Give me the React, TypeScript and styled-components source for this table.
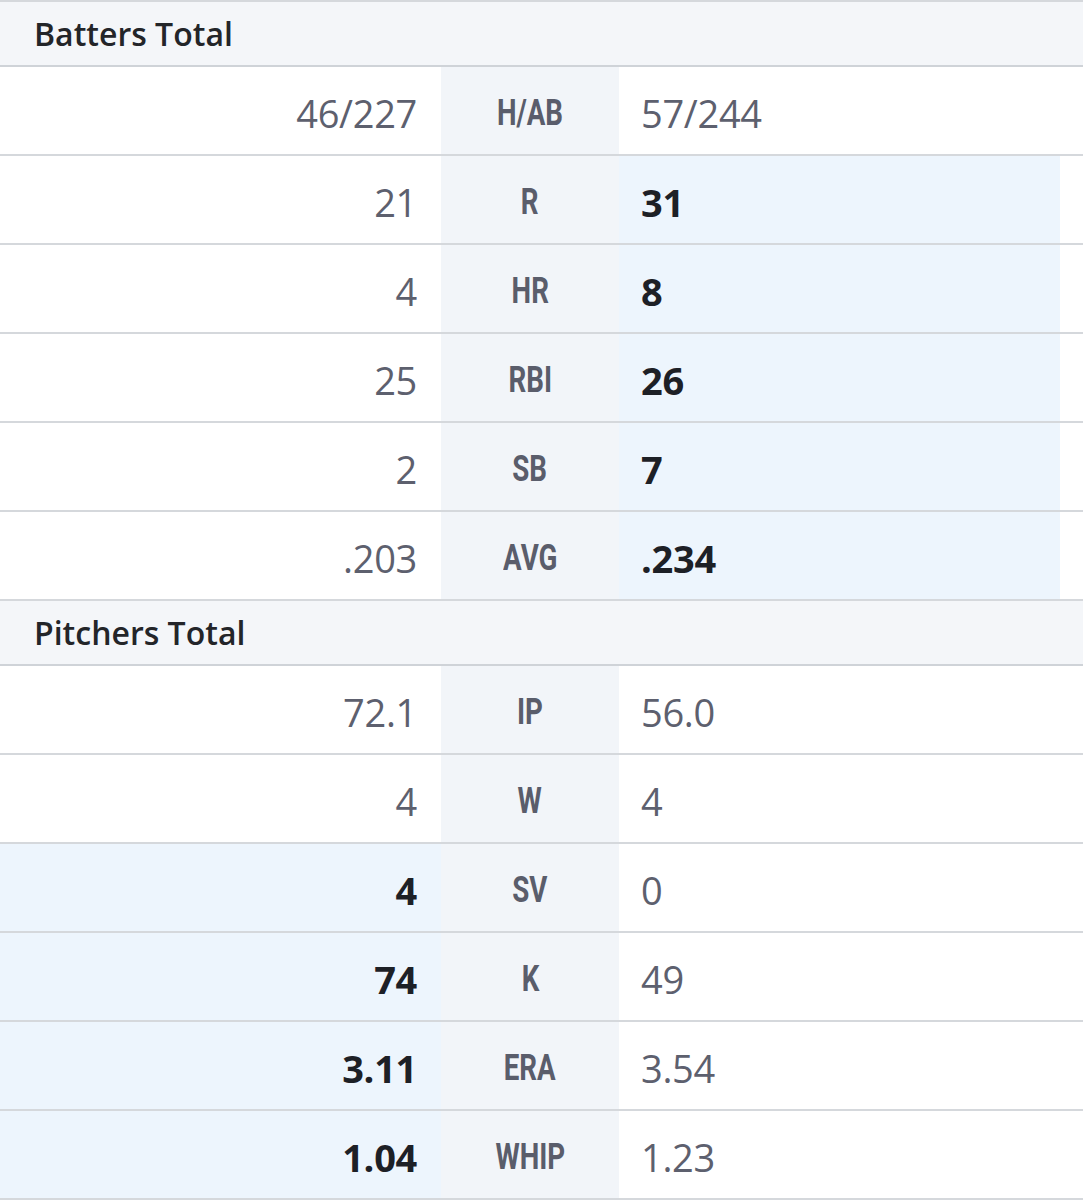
import React from "react";
import styled, { createGlobalStyle } from "styled-components";

const Global = createGlobalStyle`
  html, body { margin: 0; padding: 0; background: #ffffff; }
  body { font-family: "Open Sans", "Noto Sans", sans-serif; }
`;

const Table = styled.div`
  width: 1083px;
  border-top: 2px solid #d5d8dc;
  display: flex;
  flex-direction: column;
`;

const SectionHeader = styled.div`
  height: 63px;
  display: flex;
  align-items: center;
  padding-left: 34px;
  background: #f4f6f9;
  border-bottom: 2px solid #cfd3d8;
  font-family: "Open Sans", sans-serif;
  font-weight: 600;
  font-size: 32px;
  color: #232529;
`;

const Row = styled.div`
  display: grid;
  grid-template-columns: 441px 178px 441px 1fr;
  height: 87px;
  border-bottom: 2px solid #d5d8dc;
`;

const Cell = styled.div<{ $hl?: boolean; $align: "left" | "right" }>`
  display: flex;
  align-items: center;
  justify-content: ${(p) => (p.$align === "right" ? "flex-end" : "flex-start")};
  padding: 4px ${(p) => (p.$align === "right" ? "24px" : "0")} 0
    ${(p) => (p.$align === "left" ? "22px" : "0")};
  background: ${(p) => (p.$hl ? "#edf5fd" : "#ffffff")};
`;

const Value = styled.span<{ $bold?: boolean }>`
  font-family: "Open Sans", sans-serif;
  font-size: 38px;
  font-weight: ${(p) => (p.$bold ? 700 : 500)};
  color: ${(p) => (p.$bold ? "#1d2026" : "#5d606e")};
  letter-spacing: -0.3px;
`;

const Label = styled.div`
  display: flex;
  align-items: center;
  justify-content: center;
  padding-top: 5px;
  background: #f2f5f9;
`;

const LabelText = styled.span`
  display: inline-block;
  font-family: Roboto, "Liberation Sans", sans-serif;
  font-weight: 700;
  font-size: 36px;
  color: #5a5d6b;
  transform: scaleX(0.77);
`;

const Spacer = styled.div``;

type Stat = { label: string; left: string; right: string; winner?: "left" | "right" };

const batters: Stat[] = [
  { label: "H/AB", left: "46/227", right: "57/244" },
  { label: "R", left: "21", right: "31", winner: "right" },
  { label: "HR", left: "4", right: "8", winner: "right" },
  { label: "RBI", left: "25", right: "26", winner: "right" },
  { label: "SB", left: "2", right: "7", winner: "right" },
  { label: "AVG", left: ".203", right: ".234", winner: "right" },
];

const pitchers: Stat[] = [
  { label: "IP", left: "72.1", right: "56.0" },
  { label: "W", left: "4", right: "4" },
  { label: "SV", left: "4", right: "0", winner: "left" },
  { label: "K", left: "74", right: "49", winner: "left" },
  { label: "ERA", left: "3.11", right: "3.54", winner: "left" },
  { label: "WHIP", left: "1.04", right: "1.23", winner: "left" },
];

const StatRow = ({ s }: { s: Stat }) => (
  <Row>
    <Cell $align="right" $hl={s.winner === "left"}>
      <Value $bold={s.winner === "left"}>{s.left}</Value>
    </Cell>
    <Label>
      <LabelText>{s.label}</LabelText>
    </Label>
    <Cell $align="left" $hl={s.winner === "right"}>
      <Value $bold={s.winner === "right"}>{s.right}</Value>
    </Cell>
    <Spacer />
  </Row>
);

export default function App() {
  return (
    <>
      <Global />
      <Table>
        <SectionHeader>Batters Total</SectionHeader>
        {batters.map((s) => (
          <StatRow key={s.label} s={s} />
        ))}
        <SectionHeader>Pitchers Total</SectionHeader>
        {pitchers.map((s) => (
          <StatRow key={s.label} s={s} />
        ))}
      </Table>
    </>
  );
}
